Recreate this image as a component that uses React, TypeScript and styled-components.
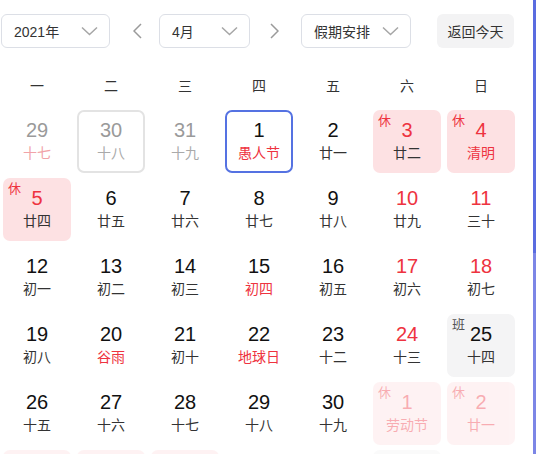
import React from "react";
import styled, { createGlobalStyle, css } from "styled-components";

const Global = createGlobalStyle`
  html, body { margin: 0; padding: 0; background: #fff; }
  body { font-family: "Liberation Sans", "Noto Sans CJK SC", sans-serif; overflow: hidden; }
  * { box-sizing: border-box; }
`;

const RED = "#ee3340";

const Page = styled.div`
  display: flex;
  width: 536px;
  height: 454px;
  overflow: hidden;
`;

const Main = styled.div`
  flex: 1;
  padding-top: 14px;
`;

const Strip = styled.div`
  width: 3px;
  display: flex;
  flex-direction: column;
`;

const StripPart = styled.div<{ $tone: "dark" | "light" }>`
  height: ${(p) => (p.$tone === "dark" ? "253px" : "auto")};
  flex: ${(p) => (p.$tone === "dark" ? "none" : "1")};
  background: ${(p) => (p.$tone === "dark" ? "#5a6ce0" : "#7c86e6")};
`;

const Toolbar = styled.div`
  display: flex;
  align-items: center;
  height: 34px;
  padding-left: 1px;
`;

const Select = styled.div<{ $w: number }>`
  width: ${(p) => p.$w}px;
  height: 34px;
  border: 1px solid #dcdfe6;
  border-radius: 6px;
  display: flex;
  align-items: center;
  justify-content: space-between;
  padding: 0 11px 0 12px;
  font-size: 14px;
  color: #333;
`;

const NavArrow = styled.div<{ $ml: number; $mr: number }>`
  display: flex;
  align-items: center;
  margin: 0 ${(p) => p.$mr}px 0 ${(p) => p.$ml}px;
`;

const TodayButton = styled.div`
  margin-left: 26px;
  width: 77px;
  height: 34px;
  border-radius: 6px;
  background: #f3f3f4;
  color: #333;
  font-size: 14px;
  display: flex;
  align-items: center;
  justify-content: center;
`;

const WeekHeader = styled.div`
  display: grid;
  grid-template-columns: repeat(7, 74px);
  margin-top: 18px;
  height: 38px;
`;

const WeekDay = styled.div`
  display: flex;
  align-items: center;
  justify-content: center;
  font-size: 14px;
  color: #333;
`;

const Grid = styled.div`
  display: grid;
  grid-template-columns: repeat(7, 74px);
  grid-auto-rows: 63px;
  row-gap: 5px;
  margin-top: 6px;
`;

type Variant = "plain" | "holiday" | "work" | "today" | "outlined";
type Tone = "normal" | "red" | "muted" | "mutedRed";

const toneColor = (t: Tone) =>
  t === "red" ? RED : t === "muted" ? "#9a9a9a" : t === "mutedRed" ? "#f1a3a8" : "#111";

const Cell = styled.div<{ $variant: Variant; $faded: boolean }>`
  position: relative;
  margin: 0 3px;
  border-radius: 7px;
  padding-top: 8px;
  display: flex;
  flex-direction: column;
  align-items: center;
  opacity: ${(p) => (p.$faded ? 0.4 : 1)};
  ${(p) =>
    p.$variant === "holiday" &&
    css`
      background: #fde1e3;
    `}
  ${(p) =>
    p.$variant === "work" &&
    css`
      background: #f4f4f5;
    `}
  ${(p) =>
    p.$variant === "today" &&
    css`
      border: 2px solid #5572e2;
      padding-top: 6px;
    `}
  ${(p) =>
    p.$variant === "outlined" &&
    css`
      border: 2px solid #e3e3e3;
      padding-top: 6px;
    `}
`;

const Num = styled.div<{ $tone: Tone }>`
  font-size: 20px;
  line-height: 24px;
  color: ${(p) => toneColor(p.$tone)};
`;

const Lunar = styled.div<{ $tone: Tone }>`
  font-size: 14px;
  line-height: 22px;
  color: ${(p) => (p.$tone === "normal" ? "#333" : p.$tone === "muted" ? "#aaa" : toneColor(p.$tone))};
`;

const Tag = styled.span<{ $kind: "休" | "班" }>`
  position: absolute;
  top: 3px;
  left: 5px;
  font-size: 13px;
  line-height: 16px;
  color: ${(p) => (p.$kind === "休" ? RED : "#555")};
`;

const Chevron = () => (
  <svg width="17" height="10" viewBox="0 0 17 10">
    <polyline points="1,1.5 8.5,8.5 16,1.5" fill="none" stroke="#a6a6a6" strokeWidth="1.5" />
  </svg>
);

const Arrow = ({ dir }: { dir: "l" | "r" }) => (
  <svg width="9" height="16" viewBox="0 0 9 16">
    <polyline
      points={dir === "l" ? "8,1 1,8 8,15" : "1,1 8,8 1,15"}
      fill="none"
      stroke="#9a9a9a"
      strokeWidth="1.5"
    />
  </svg>
);

type Day = {
  n: number;
  l: string;
  nt?: Tone;
  lt?: Tone;
  v?: Variant;
  tag?: "休" | "班";
  f?: boolean;
};

const days: Day[] = [
  { n: 29, l: "十七", nt: "muted", lt: "mutedRed" },
  { n: 30, l: "十八", nt: "muted", lt: "muted", v: "outlined" },
  { n: 31, l: "十九", nt: "muted", lt: "muted" },
  { n: 1, l: "愚人节", lt: "red", v: "today" },
  { n: 2, l: "廿一" },
  { n: 3, l: "廿二", nt: "red", v: "holiday", tag: "休" },
  { n: 4, l: "清明", nt: "red", lt: "red", v: "holiday", tag: "休" },
  { n: 5, l: "廿四", nt: "red", v: "holiday", tag: "休" },
  { n: 6, l: "廿五" },
  { n: 7, l: "廿六" },
  { n: 8, l: "廿七" },
  { n: 9, l: "廿八" },
  { n: 10, l: "廿九", nt: "red" },
  { n: 11, l: "三十", nt: "red" },
  { n: 12, l: "初一" },
  { n: 13, l: "初二" },
  { n: 14, l: "初三" },
  { n: 15, l: "初四", lt: "red" },
  { n: 16, l: "初五" },
  { n: 17, l: "初六", nt: "red" },
  { n: 18, l: "初七", nt: "red" },
  { n: 19, l: "初八" },
  { n: 20, l: "谷雨", lt: "red" },
  { n: 21, l: "初十" },
  { n: 22, l: "地球日", lt: "red" },
  { n: 23, l: "十二" },
  { n: 24, l: "十三", nt: "red" },
  { n: 25, l: "十四", v: "work", tag: "班" },
  { n: 26, l: "十五" },
  { n: 27, l: "十六" },
  { n: 28, l: "十七" },
  { n: 29, l: "十八" },
  { n: 30, l: "十九" },
  { n: 1, l: "劳动节", nt: "red", lt: "red", v: "holiday", tag: "休", f: true },
  { n: 2, l: "廿一", nt: "red", lt: "red", v: "holiday", tag: "休", f: true },
  { n: 3, l: "廿二", nt: "red", v: "holiday", tag: "休", f: true },
  { n: 4, l: "青年节", nt: "red", lt: "red", v: "holiday", tag: "休", f: true },
  { n: 5, l: "立夏", nt: "red", lt: "red", v: "holiday", tag: "休", f: true },
  { n: 6, l: "廿五", f: true },
  { n: 7, l: "廿六", f: true },
  { n: 8, l: "廿七", v: "work", tag: "班", f: true },
  { n: 9, l: "母亲节", nt: "red", lt: "red", f: true },
];

const weekdays = ["一", "二", "三", "四", "五", "六", "日"];

export default function App() {
  return (
    <Page>
      <Global />
      <Main>
        <Toolbar>
          <Select $w={109}>
            <span>2021年</span>
            <Chevron />
          </Select>
          <NavArrow $ml={23} $mr={17}>
            <Arrow dir="l" />
          </NavArrow>
          <Select $w={91}>
            <span>4月</span>
            <Chevron />
          </Select>
          <NavArrow $ml={20} $mr={22}>
            <Arrow dir="r" />
          </NavArrow>
          <Select $w={110}>
            <span>假期安排</span>
            <Chevron />
          </Select>
          <TodayButton>返回今天</TodayButton>
        </Toolbar>
        <WeekHeader>
          {weekdays.map((w) => (
            <WeekDay key={w}>{w}</WeekDay>
          ))}
        </WeekHeader>
        <Grid>
          {days.map((d, i) => (
            <Cell key={i} $variant={d.v ?? "plain"} $faded={!!d.f}>
              {d.tag && <Tag $kind={d.tag}>{d.tag}</Tag>}
              <Num $tone={d.nt ?? "normal"}>{d.n}</Num>
              <Lunar $tone={d.lt ?? "normal"}>{d.l}</Lunar>
            </Cell>
          ))}
        </Grid>
      </Main>
      <Strip>
        <StripPart $tone="dark" />
        <StripPart $tone="light" />
      </Strip>
    </Page>
  );
}
